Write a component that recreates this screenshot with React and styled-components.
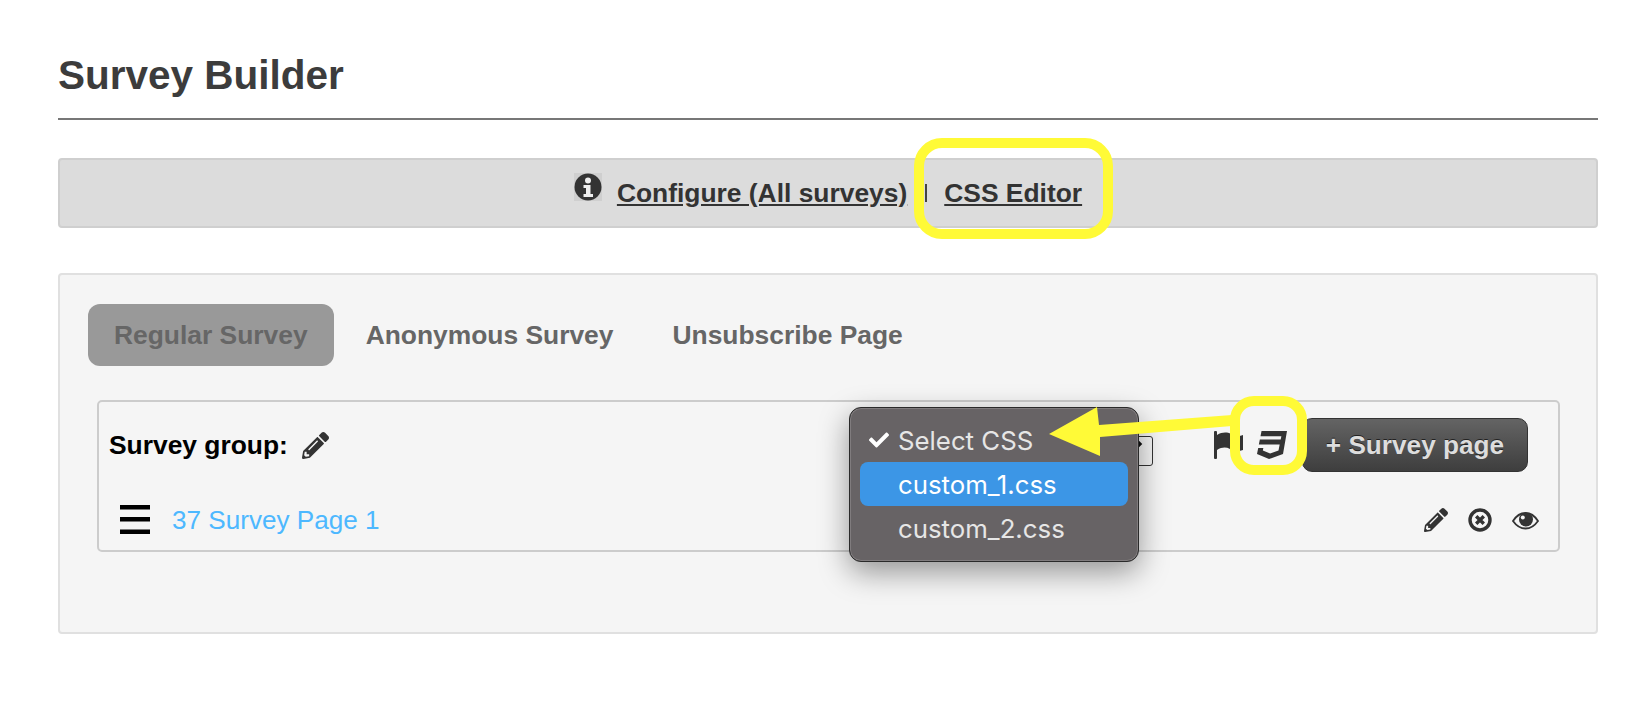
import React from "react";
import styled, { createGlobalStyle } from "styled-components";
import { FaPencilAlt, FaCss3, FaCheck } from "react-icons/fa";

const GlobalStyle = createGlobalStyle`
  html, body {
    margin: 0;
    padding: 0;
    background: #fff;
    font-family: "Liberation Sans", Arial, sans-serif;
  }
`;

const Page = styled.div`
  position: relative;
  box-sizing: border-box;
  width: 1644px;
  height: 718px;
  padding: 0 46px 0 58px;
  overflow: hidden;
`;

const Heading = styled.h1`
  box-sizing: border-box;
  height: 120px;
  margin: 0;
  padding-top: 51px;
  border-bottom: 2px solid #777;
  color: #3c3c3c;
  font-size: 40.5px;
  line-height: 48px;
  font-weight: 700;
`;

const ConfigBar = styled.div`
  box-sizing: border-box;
  display: flex;
  align-items: center;
  justify-content: center;
  height: 70px;
  margin-top: 38px;
  background: #dcdcdc;
  border: 2px solid #cfcfcf;
  border-radius: 4px;
  color: #333;
  font-size: 26.4px;
  font-weight: 700;
`;

const InfoIcon = styled.svg`
  width: 28px;
  height: 28px;
  margin: -12px 15px 0 0;
`;

const BarLink = styled.a`
  color: #333;
  text-decoration: underline;
`;

const Separator = styled.span`
  width: 2px;
  height: 18px;
  margin: 0 17px 0 18px;
  background: #444;
`;

const Panel = styled.div`
  box-sizing: border-box;
  height: 361px;
  margin-top: 45px;
  padding: 29px 36px 0 28px;
  background: #f5f5f5;
  border: 2px solid #e0e0e0;
  border-radius: 4px;
`;

const Tabs = styled.div`
  display: flex;
  align-items: center;
  height: 62px;
`;

const Tab = styled.div`
  box-sizing: border-box;
  display: flex;
  align-items: center;
  height: 62px;
  margin-right: ${(p) => (p.$active ? "32px" : "59px")};
  padding: ${(p) => (p.$active ? "0 26px" : "0")};
  background: ${(p) => (p.$active ? "#999" : "transparent")};
  border-radius: 12px;
  color: #666;
  font-size: 26.4px;
  font-weight: 700;
`;

const GroupBox = styled.div`
  box-sizing: border-box;
  height: 152px;
  margin: 34px 0 0 9px;
  padding: 16px 30px 0 10px;
  border: 2px solid #ccc;
  border-radius: 5px;
`;

const GroupRow = styled.div`
  display: flex;
  align-items: center;
  height: 54px;
`;

const GroupLabel = styled.span`
  color: #000;
  font-size: 26.4px;
  font-weight: 700;
`;

const GroupEdit = styled(FaPencilAlt)`
  width: 27px;
  height: 27px;
  margin-left: 14px;
  color: #333;
`;

const SelectStub = styled.div`
  box-sizing: border-box;
  position: relative;
  width: 60px;
  height: 30px;
  margin: 12px 0 0 auto;
  border: 1px solid #333;
  border-radius: 3px;
  &::after {
    content: "";
    position: absolute;
    right: 11px;
    top: 4px;
    width: 6px;
    height: 6px;
    background: #111;
    transform: rotate(45deg);
  }
`;

const FlagIcon = styled.svg`
  flex: none;
  width: 30px;
  height: 28px;
  margin-left: 60px;
  fill: #333;
`;

const CssIcon = styled(FaCss3)`
  flex: none;
  width: 32px;
  height: 32px;
  margin-left: 14px;
  color: #333;
`;

const AddPageButton = styled.button`
  box-sizing: border-box;
  flex: none;
  width: 226px;
  height: 54px;
  margin-left: 13px;
  background: linear-gradient(#646464, #3e3e3e);
  border: 1px solid #333;
  border-radius: 10px;
  color: #ddd;
  font-family: inherit;
  font-size: 26.2px;
  font-weight: 700;
  text-shadow: 0 -1px 0 #222;
`;

const PageRow = styled.div`
  display: flex;
  align-items: center;
  height: 30px;
  margin-top: 33px;
  padding-left: 11px;
`;

const Handle = styled.svg`
  flex: none;
  width: 30px;
  height: 30px;
  margin-right: 22px;
`;

const PageLink = styled.a`
  color: #4db8ff;
  font-size: 26.1px;
`;

const RowActions = styled.div`
  display: flex;
  align-items: center;
  gap: 20px;
  margin-left: auto;
  margin-right: -11px;
  color: #333;
  font-size: 24px;
`;

const ActionIcon = styled.svg`
  flex: none;
  width: ${(p) => p.$width}px;
  height: 24px;
`;

const Dropdown = styled.div`
  position: absolute;
  left: 849px;
  top: 407px;
  box-sizing: border-box;
  width: 290px;
  height: 155px;
  padding: 10px 10px 0;
  background: #676365;
  border: 1px solid #2a2a2a;
  border-radius: 12px;
  box-shadow: inset 0 0 0 1px #807c7e, 0 10px 30px rgba(0, 0, 0, 0.4);
  font-family: Inter, "Liberation Sans", sans-serif;
`;

const DropdownItem = styled.div`
  position: relative;
  display: flex;
  align-items: center;
  height: 44px;
  padding-left: 38px;
  background: ${(p) => (p.$selected ? "#3c96e6" : "transparent")};
  border-radius: 8px;
  color: ${(p) => (p.$selected ? "#fff" : "#e6e6e6")};
  font-size: 25.8px;
`;

const Tick = styled(FaCheck)`
  position: absolute;
  left: 9px;
  width: 20px;
  height: 20px;
  color: #fff;
`;

const Highlight = styled.div`
  position: absolute;
  left: ${(p) => p.$left}px;
  top: ${(p) => p.$top}px;
  box-sizing: border-box;
  width: ${(p) => p.$width}px;
  height: ${(p) => p.$height}px;
  border: 10px solid #fffa37;
  border-radius: ${(p) => p.$radius}px;
`;

const ArrowLayer = styled.svg`
  position: absolute;
  left: 0;
  top: 0;
  width: 1644px;
  height: 718px;
  pointer-events: none;
`;

const App = () => {
  return (
    <Page>
      <GlobalStyle />
      <Heading>Survey Builder</Heading>

      <ConfigBar>
        <InfoIcon viewBox="0 0 28 28">
          <rect width="28" height="28" fill="#cfcfcf" />
          <circle cx="14" cy="14" r="13.5" fill="#333" />
          <circle cx="14" cy="7.5" r="3" fill="#eee" />
          <path d="M9.5 12h7v9h2.5v3H9.5v-3h2.5v-6H9.5z" fill="#eee" />
        </InfoIcon>
        <BarLink>Configure (All surveys)</BarLink>
        <Separator />
        <BarLink>CSS Editor</BarLink>
      </ConfigBar>

      <Panel>
        <Tabs>
          <Tab $active>Regular Survey</Tab>
          <Tab>Anonymous Survey</Tab>
          <Tab>Unsubscribe Page</Tab>
        </Tabs>

        <GroupBox>
          <GroupRow>
            <GroupLabel>Survey group:</GroupLabel>
            <GroupEdit />
            <SelectStub />
            <FlagIcon viewBox="0 0 30 28">
              <rect x="1" y="0" width="3" height="28" rx="1" />
              <path d="M4 4C9 1 14 1 18 3S26 6 30 4V19C25 21 21 20 17 18S9 16 4 19Z" />
            </FlagIcon>
            <CssIcon />
            <AddPageButton>+ Survey page</AddPageButton>
          </GroupRow>

          <PageRow>
            <Handle viewBox="0 0 30 30">
              <rect x="0" y="0" width="30" height="4.5" />
              <rect x="0" y="12" width="30" height="4.5" />
              <rect x="0" y="24.5" width="30" height="4.5" />
            </Handle>
            <PageLink>37 Survey Page 1</PageLink>
            <RowActions>
              <FaPencilAlt />
              <ActionIcon $width={24} viewBox="0 0 24 24">
                <circle cx="12" cy="12" r="10" fill="none" stroke="#333" strokeWidth="3.4" />
                <path d="M8.2 8.2l7.6 7.6M15.8 8.2l-7.6 7.6" stroke="#333" strokeWidth="3.4" />
              </ActionIcon>
              <ActionIcon $width={27} viewBox="0 0 27 24">
                <path d="M1 13C4.5 7.5 9 5 13.5 5S22.5 7.5 26 13C22.5 18 18 20.5 13.5 20.5S4.5 18 1 13Z" fill="none" stroke="#333" strokeWidth="1.8" />
                <circle cx="14" cy="11.5" r="7" fill="#333" />
                <circle cx="10.8" cy="9.5" r="2" fill="#f5f5f5" />
              </ActionIcon>
            </RowActions>
          </PageRow>
        </GroupBox>
      </Panel>

      <Dropdown>
        <DropdownItem>
          <Tick />
          Select CSS
        </DropdownItem>
        <DropdownItem $selected>custom_1.css</DropdownItem>
        <DropdownItem>custom_2.css</DropdownItem>
      </Dropdown>

      <Highlight $left={914} $top={138} $width={199} $height={101} $radius={28} />
      <Highlight $left={1230} $top={396} $width={77} $height={79} $radius={24} />
      <ArrowLayer viewBox="0 0 1644 718">
        <polygon points="1049,434 1097,407 1099,425 1232,415 1232,426 1100,437 1100,456" fill="#fffa37" />
      </ArrowLayer>
    </Page>
  );
};

export default App;
